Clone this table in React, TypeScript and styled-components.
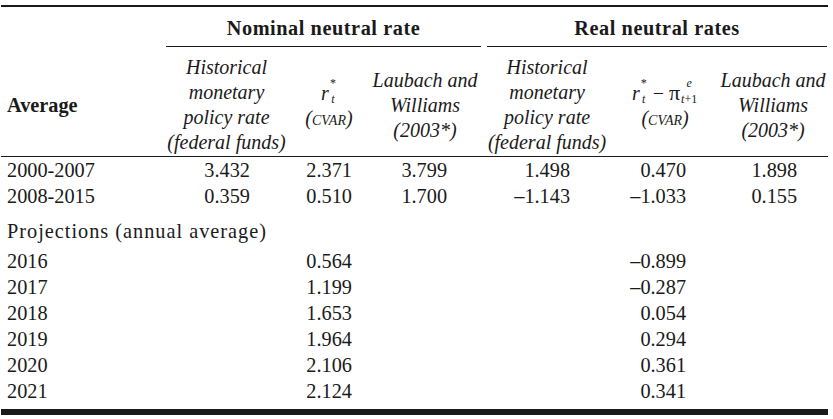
import styled, { createGlobalStyle } from 'styled-components';

const GlobalStyle = createGlobalStyle`
  body {
    margin: 0;
    background: #fff;
    color: #1a1a1a;
    font-family: "Liberation Serif", "Times New Roman", serif;
  }
`;

const Page = styled.div`
  padding: 5px 0 0 1px;
`;

const Table = styled.table`
  width: 827px;
  table-layout: fixed;
  border-collapse: collapse;
  border-top: 2px solid #1a1a1a;
  font-size: 20.3px;
`;

const GroupCell = styled.th<{ $inset: number }>`
  padding: 9px 1px 0 ${(p) => p.$inset}px;
  font-weight: bold;
  letter-spacing: 0.55px;
`;

const GroupTitle = styled.div`
  line-height: 24px;
  padding-bottom: 6px;
  border-bottom: 1px solid #1a1a1a;
  text-align: center;
`;

const SubHead = styled.th`
  padding: 8px 0 1px;
  font-size: 20px;
  font-weight: normal;
  font-style: italic;
  line-height: 25px;
  text-align: center;
  vertical-align: middle;
  border-bottom: 1.5px solid #1a1a1a;
`;

const StubHead = styled(SubHead)`
  padding-left: 6px;
  font-style: normal;
  font-weight: bold;
  font-size: 20.3px;
  text-align: left;
`;

const Upright = styled.span`
  font-style: normal;
`;

const Pi = styled.span`
  font-style: normal;
  font-size: 22px;
`;

const Source = styled.span`
  font-variant: small-caps;
`;

const Scripts = styled.span`
  display: inline-flex;
  flex-direction: column;
  gap: 7px;
  margin: 0 1px 0 1px;
  font-size: 12px;
  line-height: 9px;
  vertical-align: 13px;
`;

const Minus = styled.span`
  font-style: normal;
  margin: 0 5px;
`;

const Row = styled.tr<{ $last?: boolean }>`
  td {
    height: 26px;
    line-height: 26px;
    padding-top: 0;
    padding-bottom: ${(p) => (p.$last ? '5px' : '0')};
    border-bottom: ${(p) => (p.$last ? '6px solid #1a1a1a' : 'none')};
  }
`;

const Stub = styled.td`
  padding-left: 6px;
  text-align: left;
  white-space: nowrap;
`;

const Section = styled.td`
  padding: 9px 0 4px 6px;
  line-height: 26px;
  letter-spacing: 1px;
  white-space: nowrap;
`;

const Num = styled.td<{ $pr: number }>`
  padding-right: ${(p) => p.$pr}px;
  text-align: right;
  white-space: nowrap;
`;

const widths = [162, 127, 78, 114, 130, 106, 110];
const rightPad = [40, 16, 35, 42, 32, 31];

const averages = [
  { label: '2000-2007', values: ['3.432', '2.371', '3.799', '1.498', '0.470', '1.898'] },
  { label: '2008-2015', values: ['0.359', '0.510', '1.700', '–1.143', '–1.033', '0.155'] },
];

const projections = [
  { year: '2016', nominal: '0.564', real: '–0.899' },
  { year: '2017', nominal: '1.199', real: '–0.287' },
  { year: '2018', nominal: '1.653', real: '0.054' },
  { year: '2019', nominal: '1.964', real: '0.294' },
  { year: '2020', nominal: '2.106', real: '0.361' },
  { year: '2021', nominal: '2.124', real: '0.341' },
];

function Historical() {
  return (
    <SubHead>
      Historical
      <br />
      monetary
      <br />
      policy rate
      <br />
      (federal funds)
    </SubHead>
  );
}

function LaubachWilliams() {
  return (
    <SubHead>
      Laubach and
      <br />
      Williams
      <br />
      (2003*)
    </SubHead>
  );
}

function NeutralRate() {
  return (
    <>
      r
      <Scripts>
        <Upright>*</Upright>
        <span>t</span>
      </Scripts>
    </>
  );
}

export default function App() {
  return (
    <Page>
      <GlobalStyle />
      <Table>
        <colgroup>
          {widths.map((w, i) => (
            <col key={i} style={{ width: w }} />
          ))}
        </colgroup>
        <thead>
          <tr>
            <th />
            <GroupCell colSpan={3} $inset={3}>
              <GroupTitle>Nominal neutral rate</GroupTitle>
            </GroupCell>
            <GroupCell colSpan={3} $inset={5}>
              <GroupTitle>Real neutral rates</GroupTitle>
            </GroupCell>
          </tr>
          <tr>
            <StubHead>Average</StubHead>
            <Historical />
            <SubHead>
              <NeutralRate />
              <br />
              (<Source>cvar</Source>)
            </SubHead>
            <LaubachWilliams />
            <Historical />
            <SubHead>
              <NeutralRate />
              <Minus>−</Minus>
              <Pi>π</Pi>
              <Scripts>
                <span>e</span>
                <span>
                  t<Upright>+1</Upright>
                </span>
              </Scripts>
              <br />
              (<Source>cvar</Source>)
            </SubHead>
            <LaubachWilliams />
          </tr>
        </thead>
        <tbody>
          {averages.map((row) => (
            <Row key={row.label}>
              <Stub>{row.label}</Stub>
              {row.values.map((v, i) => (
                <Num key={i} $pr={rightPad[i]}>
                  {v}
                </Num>
              ))}
            </Row>
          ))}
          <tr>
            <Section colSpan={7}>Projections (annual average)</Section>
          </tr>
          {projections.map((row, i) => (
            <Row key={row.year} $last={i === projections.length - 1}>
              <Stub>{row.year}</Stub>
              <td />
              <Num $pr={rightPad[1]}>{row.nominal}</Num>
              <td />
              <td />
              <Num $pr={rightPad[4]}>{row.real}</Num>
              <td />
            </Row>
          ))}
        </tbody>
      </Table>
    </Page>
  );
}
